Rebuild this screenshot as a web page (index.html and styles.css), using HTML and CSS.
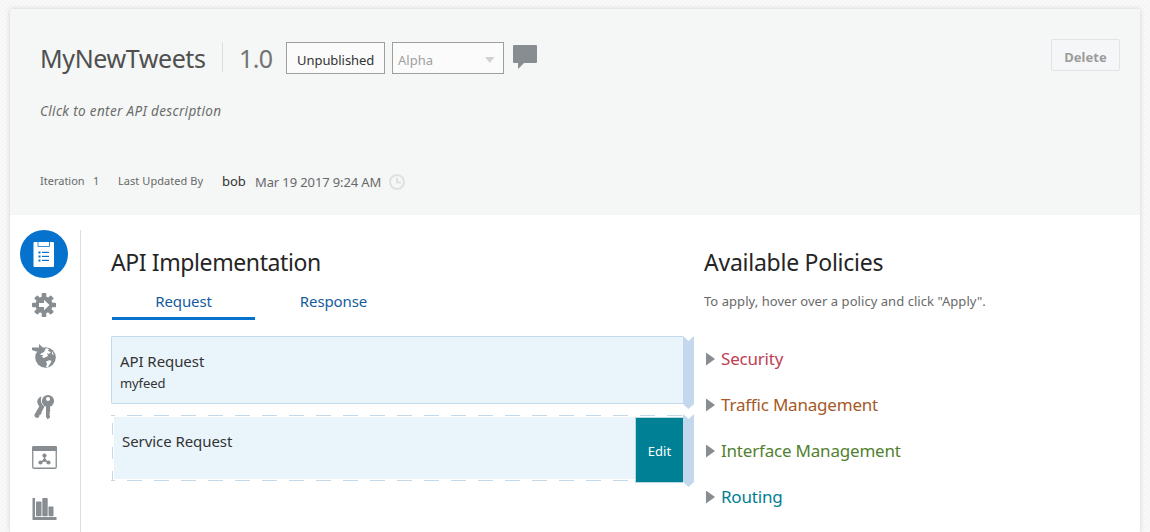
FILE: index.html
```
<!DOCTYPE html>
<html lang="en">
<head>
<meta charset="utf-8">
<title>MyNewTweets</title>
<link rel="stylesheet" href="styles.css">
</head>
<body>
<div class="card">
  <header class="header">
    <div class="title-row">
      <h1 class="name">MyNewTweets</h1>
      <span class="version">1.0</span>
      <span class="state">Unpublished</span>
      <span class="select">Alpha
        <svg width="10" height="6" viewBox="0 0 10 6"><path d="M0 0h9.500L4.750 6z" fill="#d0d3d5"/></svg>
      </span>
      <svg class="comment" width="24" height="25" viewBox="0 0 24 25"><path d="M1 0h22q1 0 1 1v16q0 1-1 1H11l-6 6v-6H1q-1 0-1-1V1q0-1 1-1z" fill="#878d91"/></svg>
      <button class="delete">Delete</button>
    </div>
    <p class="description">Click to enter API description</p>
    <div class="meta">
      <span class="iteration">Iteration</span>
      <span class="count">1</span>
      <span class="updated">Last Updated By</span>
      <span class="user">bob</span>
      <span class="date">Mar 19 2017 9:24 AM</span>
      <svg class="clock" width="16" height="16" viewBox="0 0 16 16" fill="none" stroke="#dfe1e1" stroke-width="2"><circle cx="8" cy="8" r="7"/><path d="M8 4v4.500h4"/></svg>
    </div>
  </header>
  <div class="body">
    <nav class="rail">
      <a class="rail-item active">
        <svg width="22" height="26" viewBox="0 0 22 26"><rect x=".5" y="1" width="20.500" height="25" rx="1" fill="#fff"/><path d="M5 1v4.500h11.500V1" fill="none" stroke="#0572ce" stroke-width=".8"/><g fill="#0572ce"><rect x="5.500" y="10.500" width="2" height="2"/><rect x="5.500" y="14.500" width="2" height="2"/><rect x="5.500" y="18.500" width="2" height="2"/><rect x="9" y="10.800" width="7" height="1.200"/><rect x="9" y="14.800" width="7" height="1.200"/><rect x="9" y="18.800" width="7" height="1.200"/></g></svg>
      </a>
      <a class="rail-item">
        <svg width="24" height="24" viewBox="-12 -12 24 24"><g fill="#878d91"><circle r="8.500"/><rect x="-2.300" y="-12" width="4.600" height="24" rx=".8"/><rect x="-12" y="-2.300" width="24" height="4.600" rx=".8"/><g transform="rotate(45)"><rect x="-2.300" y="-11.700" width="4.600" height="23.400" rx=".8"/><rect x="-11.700" y="-2.300" width="23.400" height="4.600" rx=".8"/></g></g><path d="M-5-2H0v-3.300L5.500 0 0 5.300V2h-5z" fill="#fff"/></svg>
      </a>
      <a class="rail-item">
        <svg width="24" height="24" viewBox="0 0 24 24"><circle cx="13.500" cy="13.500" r="10.300" fill="#878d91"/><path d="M8 10l4-2 2-4 3 1-1 2 3 1-2 2-2-1 1 3-2 1-2 1-2-1 1-2-2 0zM14 17.500l4-1.500 1.500 1.500-3.500 5.500h-2l1-3zM20 7l2 4-2-1z" fill="#fff"/><path d="M0 3.500h7V0l6 5.500-6 5.500V7.500H4L0 6z" fill="#878d91"/></svg>
      </a>
      <a class="rail-item">
        <svg width="24" height="26" viewBox="0 0 24 26"><path d="M9.500 2.500a5.500 5.500 0 0 0-3 8.800l.8.900L2.300 21l.8 2.300 2.200.7 1.800-1 .4-2 1.700-.8.300-2 3-5.700a8 8 0 0 1-3-10z" fill="#878d91"/><circle cx="16" cy="7" r="6.100" fill="#878d91"/><path d="M14 11v12l1.700 2.200L18 23.500v-2l-1-.5 1.300-1.500-1-.8.8-1V11z" fill="#878d91"/><circle cx="16" cy="5" r="2" fill="#fff"/></svg>
      </a>
      <a class="rail-item">
        <svg width="25" height="23" viewBox="0 0 25 23"><rect x=".75" y=".75" width="23.500" height="21.500" rx="1.200" fill="#fff" stroke="#878d91" stroke-width="1.300"/><path d="M1 0h23l1 1v4H0V1z" fill="#878d91"/><path d="M12.500 9.500v4.700L8 16.500M12.500 14.200l4.500 2.300" fill="none" stroke="#878d91" stroke-width="1.400"/><g fill="#878d91"><circle cx="12.500" cy="9.500" r="2.100"/><circle cx="12.500" cy="14.300" r="1.800"/><circle cx="8.500" cy="16.500" r="2.100"/><circle cx="16.500" cy="16.500" r="2.100"/></g></svg>
      </a>
      <a class="rail-item">
        <svg width="25" height="22" viewBox="0 0 25 22" fill="#878d91"><path d="M.5 0H3v19h21.500v3H.5z"/><rect x="4" y="3.500" width="5.500" height="14.700" rx=".8"/><rect x="10.300" y="0" width="5.400" height="18.200" rx=".8"/><rect x="16.500" y="8.500" width="5" height="9.700" rx=".8"/></svg>
      </a>
    </nav>
    <main class="implementation">
      <h2 class="heading">API Implementation</h2>
      <div class="tabs">
        <a class="tab selected">Request</a>
        <a class="tab">Response</a>
      </div>
      <section class="step">
        <div class="panel api">
          <div class="panel-title">API Request</div>
          <div class="panel-detail">myfeed</div>
        </div>
        <div class="flow"></div>
      </section>
      <section class="step">
        <div class="panel service">
          <div class="service-fill"><div class="panel-title">Service Request</div></div>
          <button class="edit">Edit</button>
        </div>
        <div class="flow"></div>
      </section>
    </main>
    <aside class="policies">
      <h2 class="heading available">Available Policies</h2>
      <p class="hint">To apply, hover over a policy and click "Apply".</p>
      <ul class="policy-list">
        <li class="policy security">Security</li>
        <li class="policy traffic">Traffic Management</li>
        <li class="policy interface">Interface Management</li>
        <li class="policy routing">Routing</li>
      </ul>
    </aside>
  </div>
</div>
</body>
</html>
```
FILE: styles.css
```
* { box-sizing: border-box; }
html, body { height: 100%; }
body {
  margin: 0;
  padding: 9px 10px 0;
  overflow: hidden;
  font: 13px "Noto Sans", "Open Sans", sans-serif;
  color: #333;
  background: repeating-linear-gradient(45deg, #fafafa 0, #fafafa 1.414px, #f4f4f4 1.414px, #f4f4f4 2.828px);
}
h1, h2, p, ul { margin: 0; padding: 0; font-weight: 400; }
svg { display: block; flex: none; }
span { white-space: nowrap; }
button { font-family: inherit; font-size: 13px; padding: 0; }

.card { height: 523px; background: #fff; box-shadow: 0 0 5px rgba(0, 0, 0, .15); }
.header { height: 206px; padding: 30px 20px 0 30px; background: #f4f7f6; }
.title-row { display: flex; height: 35px; align-items: flex-start; }
.name { width: 183px; height: 30px; margin-top: 3px; border-right: 1px solid #d6dfe6; font-size: 25px; line-height: 32px; letter-spacing: -.4px; color: #4f4f4f; }
.version { width: 47px; margin: 3px 0 0 16px; font-size: 25px; line-height: 32px; letter-spacing: -.6px; color: #737373; }
.state, .select { height: 32px; margin-top: 3px; padding: 4px 10px 0; border: 1px solid #9e9e9e; background: #fbfbfb; line-height: 27px; }
.state { width: 99px; letter-spacing: -.05px; }
.select { display: flex; justify-content: space-between; width: 112px; margin-left: 7px; padding: 4px 8px 0 5px; color: #a0a0a0; }
.select svg { margin-top: 10px; }
.comment { margin: 6px 0 0 9px; }
.delete { width: 69px; height: 32px; margin-left: auto; padding-top: 3px; border: 1px solid #e0e3e8; border-radius: 2px; background: #f4f6f8; font-weight: 700; color: #9c9c9c; }
.description { margin-top: 27px; height: 20px; font-size: 13.5px; line-height: 20px; letter-spacing: .34px; font-style: italic; color: #6c6c6c; }
.meta { display: flex; margin-top: 50px; height: 22px; line-height: 20px; color: #696969; }
.iteration, .count, .updated { font-size: 11px; }
.iteration { width: 53px; }
.count { width: 25px; }
.updated { width: 104px; letter-spacing: .05px; }
.user { width: 33px; color: #333; }
.date { width: 134px; padding-top: 1px; letter-spacing: -.12px; }
.clock { margin-top: 3px; }

.body { display: flex; height: 317px; padding-top: 15px; }
.rail { width: 71px; padding-left: 10px; border-right: 1px solid #d6dfe9; }
.rail-item { display: flex; width: 48px; height: 51px; align-items: center; justify-content: center; }
.rail-item.active { height: 48px; margin-bottom: 1px; border-radius: 50%; background: #0572ce; }

.implementation { width: 583px; margin-left: 30px; }
.heading { height: 32px; margin-top: 16px; font-size: 23px; line-height: 32px; letter-spacing: -.4px; color: #252525; }
.tabs { display: flex; height: 41px; margin: 1px 0 16px 1px; }
.tab { width: 143px; padding-top: 12px; font-size: 15px; line-height: 20px; letter-spacing: -.1px; text-align: center; color: #145c9e; }
.tab + .tab { margin-left: 7px; }
.tab.selected { border-bottom: 3px solid #0572ce; }
.step { display: flex; height: 73px; margin-bottom: 5px; }
.panel { width: 572px; height: 68px; }
.api { padding: 14px 8px 0; border: 1px solid #c4d9ea; border-right: 0; border-radius: 2px 0 0 2px; background: #e9f5fb; }
.panel-title { height: 20px; font-size: 15px; line-height: 20px; letter-spacing: -.07px; color: #333; }
.panel-detail { height: 20px; margin-top: 2px; line-height: 20px; letter-spacing: -.1px; }
.flow { width: 11px; height: 73px; background: #c4d8ed; clip-path: polygon(0 0, 50% 5px, 100% 0, 100% 68px, 50% 100%, 0 68px); }
.service {
  display: flex;
  margin-top: 1px;
  height: 68px;
  padding: 2px 0 0 3px;
  background:
    repeating-linear-gradient(90deg, #c4d9ea 0 15px, transparent 15px 27px) -11px 0 / 583px 1px no-repeat,
    repeating-linear-gradient(90deg, #c4d9ea 0 15px, transparent 15px 27px) -11px 65px / 583px 1px no-repeat,
    repeating-linear-gradient(180deg, transparent 0 8px, #c4d9ea 8px 20px, transparent 20px 24px) 1px 0 / 1px 66px no-repeat;
}
.service-fill { width: 521px; height: 62px; padding: 14px 8px 0; background: #e9f5fb; }
.edit { width: 48px; height: 66px; padding-top: 1px; border: 1px solid #b8d7e2; border-right: 0; background: #008094; color: #fff; }

.policies { margin-left: 10px; }
.available { letter-spacing: -.25px; }
.hint { height: 20px; margin-top: 13px; line-height: 20px; letter-spacing: .05px; color: #696969; white-space: nowrap; }
.policy-list { margin-top: 25px; list-style: none; }
.policy { display: flex; align-items: center; height: 46px; padding-left: 2px; font-size: 17px; line-height: 46px; letter-spacing: -.2px; }
.policy::before { content: ""; width: 9px; height: 13px; margin-right: 6px; background: #878d91; clip-path: polygon(0 0, 100% 50%, 0 100%); }
.security { color: #bf4055; }
.traffic { color: #a55a27; }
.interface { color: #52812f; }
.routing { color: #007e91; }
```
